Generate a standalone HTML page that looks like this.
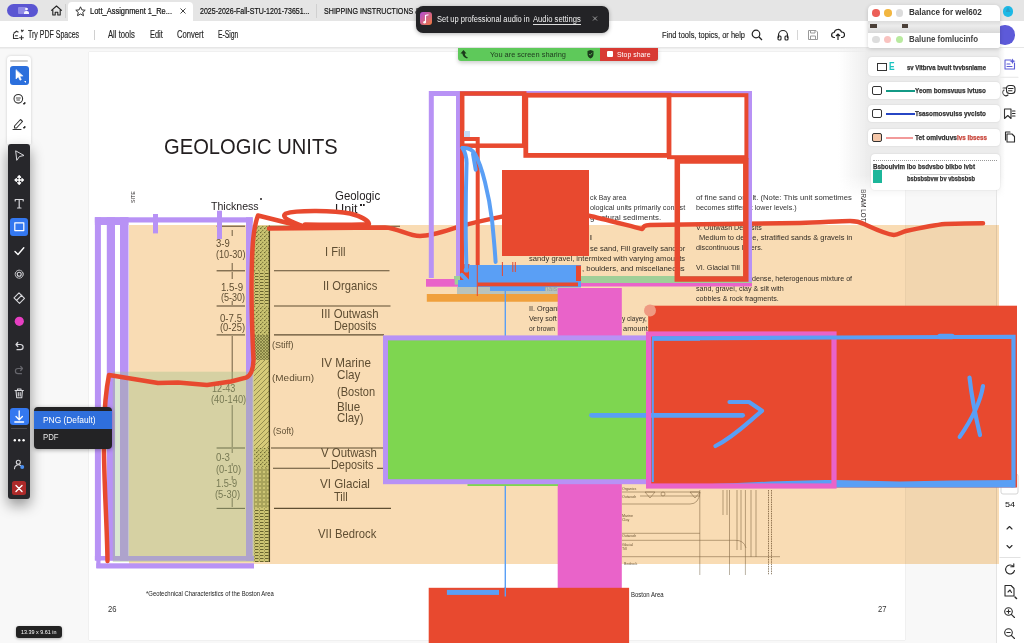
<!DOCTYPE html>
<html><head><meta charset="utf-8">
<style>
*{margin:0;padding:0;box-sizing:border-box}
html,body{width:1024px;height:643px;overflow:hidden;background:#f8f8f8;font-family:"Liberation Sans",sans-serif;position:relative}
.a{position:absolute}
.t{position:absolute;white-space:nowrap;transform-origin:0 0}
svg{position:absolute;left:0;top:0}
</style></head><body>
<div class="a" style="left:0;top:0;width:1024px;height:21px;background:#e5e5e5"></div>
<div class="a" style="left:0;top:21px;width:1024px;height:27px;background:#fff;border-bottom:1px solid #e6e6e6;box-shadow:0 1px 1px rgba(0,0,0,.04)"></div>
<div class="a" style="left:7px;top:4px;width:31px;height:13px;border-radius:7px;background:#5a55d2"></div>
<div class="a" style="left:17.5px;top:7px;width:9px;height:7px;background:#8f8ae6;border-radius:1px"></div>
<div class="a" style="left:24px;top:10.5px;width:5px;height:3.5px;background:#f4f4ff;border-radius:2px 2px 0 0"></div>
<div class="a" style="left:25.3px;top:7.8px;width:2.4px;height:2.4px;background:#f4f4ff;border-radius:50%"></div>
<svg style="left:50px;top:5px" width="13" height="11" viewBox="0 0 13 11"><path d="M1.2 5.6 L6.5 1 L11.8 5.6 M2.8 4.3 V10 H5.2 V7.2 H7.8 V10 H10.2 V4.3" fill="none" stroke="#222" stroke-width="1.1" stroke-linejoin="round"/></svg>
<div class="a" style="left:65px;top:4px;width:1px;height:14px;background:#d0d0d0"></div>
<div class="a" style="left:68px;top:2px;width:125px;height:19px;background:#fff;border-radius:4px 4px 0 0"></div>
<svg style="left:74.5px;top:6px" width="11" height="11" viewBox="0 0 11 11"><path d="M5.5 0.8 L6.9 3.9 L10.2 4.2 L7.7 6.4 L8.5 9.7 L5.5 8 L2.5 9.7 L3.3 6.4 L0.8 4.2 L4.1 3.9 Z" fill="none" stroke="#333" stroke-width="1" stroke-linejoin="round"/></svg>
<div class="t" style="left:90.0px;top:6.98px;font-size:9px;line-height:1;color:#111;font-weight:normal;transform:scaleX(0.832);-webkit-text-stroke:0.2px #111;">Lott_Assignment 1_Re...</div>
<svg style="left:180px;top:8px" width="6" height="6" viewBox="0 0 6 6"><path d="M0.5 0.5 L5.5 5.5 M5.5 0.5 L0.5 5.5" stroke="#444" stroke-width="1"/></svg>
<div class="t" style="left:199.5px;top:6.98px;font-size:9px;line-height:1;color:#111;font-weight:normal;transform:scaleX(0.782);-webkit-text-stroke:0.2px #111;">2025-2026-Fall-STU-1201-73651...</div>
<div class="a" style="left:316px;top:4px;width:1px;height:14px;background:#d0d0d0"></div>
<div class="t" style="left:324.0px;top:6.98px;font-size:9px;line-height:1;color:#111;font-weight:normal;transform:scaleX(0.790);-webkit-text-stroke:0.2px #111;">SHIPPING INSTRUCTIONS &amp;</div>
<svg style="left:12px;top:29px" width="13" height="12" viewBox="0 0 13 12"><path d="M1.5 4.5 L4.5 2.2 L6.5 3.2 M1.5 5 V9.5 H6.5 M3 6.8 H5.8 M9.5 6.5 V11 M7.2 8.8 H11.8 M9.3 0.8 L10 2.5 L11.5 1" fill="none" stroke="#333" stroke-width="1.1"/></svg>
<div class="t" style="left:28.4px;top:30.04px;font-size:10px;line-height:1;color:#222;font-weight:normal;transform:scaleX(0.700);-webkit-text-stroke:0.15px #222;">Try PDF Spaces</div>
<div class="a" style="left:94px;top:30px;width:1px;height:10px;background:#d0d0d0"></div>
<div class="t" style="left:108.4px;top:30.04px;font-size:10px;line-height:1;color:#222;font-weight:normal;transform:scaleX(0.768);-webkit-text-stroke:0.15px #222;">All tools</div>
<div class="t" style="left:149.8px;top:30.04px;font-size:10px;line-height:1;color:#222;font-weight:normal;transform:scaleX(0.737);-webkit-text-stroke:0.15px #222;">Edit</div>
<div class="t" style="left:177.0px;top:30.04px;font-size:10px;line-height:1;color:#222;font-weight:normal;transform:scaleX(0.763);-webkit-text-stroke:0.15px #222;">Convert</div>
<div class="t" style="left:218.4px;top:30.04px;font-size:10px;line-height:1;color:#222;font-weight:normal;transform:scaleX(0.676);-webkit-text-stroke:0.15px #222;">E-Sign</div>
<div class="t" style="left:662.0px;top:30.46px;font-size:9.5px;line-height:1;color:#222;font-weight:normal;transform:scaleX(0.786);-webkit-text-stroke:0.15px #222;">Find tools, topics, or help</div>
<svg style="left:751px;top:29px" width="12" height="12" viewBox="0 0 12 12"><circle cx="5" cy="5" r="3.8" fill="none" stroke="#222" stroke-width="1.2"/><path d="M7.8 7.8 L11 11" stroke="#222" stroke-width="1.3"/></svg>
<svg style="left:777px;top:29px" width="12" height="12" viewBox="0 0 12 12"><path d="M1.5 9 V6 A4.5 4.5 0 0 1 10.5 6 V9" fill="none" stroke="#222" stroke-width="1.2"/><rect x="1" y="7" width="3" height="4" rx="1" fill="none" stroke="#222" stroke-width="1.1"/><rect x="8" y="7" width="3" height="4" rx="1" fill="none" stroke="#222" stroke-width="1.1"/></svg>
<div class="a" style="left:797px;top:30px;width:1px;height:10px;background:#d6d6d6"></div>
<svg style="left:807px;top:29px" width="12" height="12" viewBox="0 0 12 12"><path d="M1.5 1.5 H9 L10.5 3 V10.5 H1.5 Z M3.5 1.5 V4 H8 V1.5 M3.5 10.5 V7 H8.5 V10.5" fill="none" stroke="#999" stroke-width="1"/></svg>
<svg style="left:831px;top:28px" width="14" height="13" viewBox="0 0 14 13"><path d="M4 9.5 H3 A2.5 2.5 0 0 1 3.2 4.5 A3.8 3.8 0 0 1 10.5 4 A2.7 2.7 0 0 1 11 9.5 H10 M7 12 V6 M5 8 L7 6 L9 8" fill="none" stroke="#222" stroke-width="1.2"/></svg>
<div class="a" style="left:996px;top:48px;width:28px;height:595px;background:#fff;border-left:1px solid #e4e4e4"></div>
<svg width="1024" height="643" viewBox="0 0 1024 643"><rect x="1001" y="474" width="17" height="20" rx="2" stroke="#d5d5d5" fill="#fff"/></svg>
<div class="a" style="left:89px;top:52px;width:816px;height:588px;background:#fff;box-shadow:0 0 1px rgba(0,0,0,.2)"></div>
<div class="t" style="left:163.7px;top:136.25px;font-size:21.8px;line-height:1;color:#231f20;font-weight:normal;transform:scaleX(0.925);">GEOLOGIC UNITS</div>
<div class="t" style="left:211.0px;top:201.07px;font-size:11.5px;line-height:1;color:#231f20;font-weight:normal;transform:scaleX(0.920);">Thickness</div>
<div class="a" style="left:259.5px;top:198px;width:2px;height:2px;border-radius:50%;background:#231f20"></div>
<div class="t" style="left:334.7px;top:190.12px;font-size:12.5px;line-height:1;color:#231f20;font-weight:normal;transform:scaleX(0.914);">Geologic</div>
<div class="t" style="left:334.5px;top:203.42px;font-size:12.5px;line-height:1;color:#231f20;font-weight:normal;transform:scaleX(1.012);">Unit</div>
<div class="a" style="left:360px;top:204px;width:5px;height:2px;border-top:2px dotted #231f20"></div>
<div class="t" style="left:130.5px;top:203px;font-size:5.5px;line-height:1;color:#231f20;transform:rotate(-90deg) scaleX(0.95);transform-origin:0 0">SITE</div>
<div class="t" style="left:215.6px;top:237.51px;font-size:10.5px;line-height:1;color:#615a47;font-weight:normal;transform:scaleX(0.903);">3-9</div>
<div class="t" style="left:215.6px;top:248.61px;font-size:10.5px;line-height:1;color:#615a47;font-weight:normal;transform:scaleX(0.869);">(10-30)</div>
<div class="t" style="left:221.0px;top:282.11px;font-size:10.5px;line-height:1;color:#615a47;font-weight:normal;transform:scaleX(0.919);">1.5-9</div>
<div class="t" style="left:221.0px;top:291.61px;font-size:10.5px;line-height:1;color:#615a47;font-weight:normal;transform:scaleX(0.857);">(5-30)</div>
<div class="t" style="left:220.0px;top:313.11px;font-size:10.5px;line-height:1;color:#615a47;font-weight:normal;transform:scaleX(0.919);">0-7.5</div>
<div class="t" style="left:220.0px;top:321.61px;font-size:10.5px;line-height:1;color:#615a47;font-weight:normal;transform:scaleX(0.893);">(0-25)</div>
<div class="t" style="left:211.7px;top:382.61px;font-size:10.5px;line-height:1;color:#615a47;font-weight:normal;transform:scaleX(0.868);">12-43</div>
<div class="t" style="left:210.7px;top:394.11px;font-size:10.5px;line-height:1;color:#615a47;font-weight:normal;transform:scaleX(0.887);">(40-140)</div>
<div class="t" style="left:216.0px;top:452.11px;font-size:10.5px;line-height:1;color:#615a47;font-weight:normal;transform:scaleX(0.923);">0-3</div>
<div class="t" style="left:216.0px;top:464.11px;font-size:10.5px;line-height:1;color:#615a47;font-weight:normal;transform:scaleX(0.893);">(0-10)</div>
<div class="t" style="left:216.0px;top:478.11px;font-size:10.5px;line-height:1;color:#615a47;font-weight:normal;transform:scaleX(0.878);">1.5-9</div>
<div class="t" style="left:215.0px;top:488.61px;font-size:10.5px;line-height:1;color:#615a47;font-weight:normal;transform:scaleX(0.893);">(5-30)</div>
<div class="t" style="left:325.0px;top:245.67px;font-size:12.2px;line-height:1;color:#615a47;font-weight:normal;transform:scaleX(0.917);">I Fill</div>
<div class="t" style="left:323.0px;top:279.87px;font-size:12.2px;line-height:1;color:#615a47;font-weight:normal;transform:scaleX(0.921);">II Organics</div>
<div class="t" style="left:321.0px;top:308.27px;font-size:12.2px;line-height:1;color:#615a47;font-weight:normal;transform:scaleX(0.935);">III Outwash</div>
<div class="t" style="left:334.4px;top:320.07px;font-size:12.2px;line-height:1;color:#615a47;font-weight:normal;transform:scaleX(0.893);">Deposits</div>
<div class="t" style="left:321.0px;top:356.77px;font-size:12.2px;line-height:1;color:#615a47;font-weight:normal;transform:scaleX(0.956);">IV Marine</div>
<div class="t" style="left:336.7px;top:369.27px;font-size:12.2px;line-height:1;color:#615a47;font-weight:normal;transform:scaleX(0.955);">Clay</div>
<div class="t" style="left:336.7px;top:386.27px;font-size:12.2px;line-height:1;color:#615a47;font-weight:normal;transform:scaleX(0.906);">(Boston</div>
<div class="t" style="left:336.7px;top:400.67px;font-size:12.2px;line-height:1;color:#615a47;font-weight:normal;transform:scaleX(0.954);">Blue</div>
<div class="t" style="left:336.7px;top:412.27px;font-size:12.2px;line-height:1;color:#615a47;font-weight:normal;transform:scaleX(0.934);">Clay)</div>
<div class="t" style="left:321.0px;top:446.87px;font-size:12.2px;line-height:1;color:#615a47;font-weight:normal;transform:scaleX(0.935);">V Outwash</div>
<div class="t" style="left:330.5px;top:458.87px;font-size:12.2px;line-height:1;color:#615a47;font-weight:normal;transform:scaleX(0.893);">Deposits</div>
<div class="t" style="left:320.0px;top:477.57px;font-size:12.2px;line-height:1;color:#615a47;font-weight:normal;transform:scaleX(0.958);">VI Glacial</div>
<div class="t" style="left:333.8px;top:490.67px;font-size:12.2px;line-height:1;color:#615a47;font-weight:normal;transform:scaleX(0.905);">Till</div>
<div class="t" style="left:318.0px;top:528.27px;font-size:12.2px;line-height:1;color:#615a47;font-weight:normal;transform:scaleX(0.926);">VII Bedrock</div>
<div class="t" style="left:272.3px;top:339.96px;font-size:9.5px;line-height:1;color:#615a47;font-weight:normal;transform:scaleX(0.950);">(Stiff)</div>
<div class="t" style="left:271.9px;top:372.96px;font-size:9.5px;line-height:1;color:#615a47;font-weight:normal;transform:scaleX(1.047);">(Medium)</div>
<div class="t" style="left:273.2px;top:425.96px;font-size:9.5px;line-height:1;color:#615a47;font-weight:normal;transform:scaleX(0.900);">(Soft)</div>
<svg width="1024" height="643" viewBox="0 0 1024 643"><defs><pattern id="dots" width="4" height="4" patternUnits="userSpaceOnUse"><rect width="4" height="4" fill="#cfe3a0"/><rect x="0" y="0" width="1.3" height="1.1" fill="#6f7a45"/><rect x="2.2" y="1.8" width="1.1" height="1.3" fill="#7d8850"/><rect x="1" y="3" width="0.9" height="0.8" fill="#8a9660"/></pattern><pattern id="hl" width="5" height="3" patternUnits="userSpaceOnUse"><rect width="5" height="3" fill="#d2e5a4"/><rect y="0" width="3.5" height="1" fill="#6a7542"/><rect x="4" y="1.5" width="1" height="0.8" fill="#7a8550"/></pattern><pattern id="xh" width="3" height="3" patternUnits="userSpaceOnUse"><rect width="3" height="3" fill="#bcd094"/><path d="M0 3 L3 0 M0 0 L3 3" stroke="#6a7542" stroke-width="0.6"/></pattern><pattern id="diag" width="5" height="5" patternUnits="userSpaceOnUse"><rect width="5" height="5" fill="#dcecaa"/><path d="M0 5 L5 0 M-1 1 L1 -1 M4 6 L6 4" stroke="#768150" stroke-width="0.65"/></pattern><pattern id="circ" width="4" height="4" patternUnits="userSpaceOnUse"><rect width="4" height="4" fill="#d2e5a4"/><circle cx="2" cy="2" r="1.3" fill="none" stroke="#6f7a45" stroke-width="0.6"/></pattern></defs><rect x="253.7" y="225.6" width="15.6" height="45.400000000000006" fill="url(#dots)"/><rect x="253.7" y="271" width="15.6" height="35" fill="url(#hl)"/><rect x="253.7" y="306" width="15.6" height="29" fill="url(#dots)"/><rect x="253.7" y="335" width="15.6" height="25" fill="url(#xh)"/><rect x="253.7" y="360" width="15.6" height="88" fill="url(#diag)"/><rect x="253.7" y="448" width="15.6" height="20" fill="url(#dots)"/><rect x="253.7" y="468" width="15.6" height="40" fill="url(#circ)"/><rect x="253.7" y="508" width="15.6" height="54" fill="url(#hl)"/><path d="M269.4 225.6 V562" stroke="#4a4a28" stroke-width="1.3"/><path d="M216.6 226.2 H245" stroke="#615a47" stroke-width="1.1"/><path d="M216.6 270.8 H245" stroke="#615a47" stroke-width="1.1"/><path d="M216.6 306 H245" stroke="#615a47" stroke-width="1.1"/><path d="M216.6 334.9 H245" stroke="#615a47" stroke-width="1.1"/><path d="M216.6 448 H245" stroke="#615a47" stroke-width="1.1"/><path d="M216.6 508.4 H245" stroke="#615a47" stroke-width="1.1"/><path d="M270 226.2 H400" stroke="#615a47" stroke-width="1.1"/><path d="M274 270.8 H389.5" stroke="#615a47" stroke-width="1.1"/><path d="M274 306 H390.5" stroke="#615a47" stroke-width="1.1"/><path d="M274 334.9 H384" stroke="#615a47" stroke-width="1.1"/><path d="M271 448 H384" stroke="#615a47" stroke-width="1.1"/><path d="M273 468.3 H330" stroke="#615a47" stroke-width="1.1"/><path d="M274 508.4 H391" stroke="#615a47" stroke-width="1.1"/><path d="M377 468.3 H384" stroke="#615a47" stroke-width="1.1"/><path d="M232.2 230 V236" stroke="#615a47" stroke-width="0.9"/><path d="M232.2 263 V270" stroke="#615a47" stroke-width="0.9"/><path d="M232.2 272 V279" stroke="#615a47" stroke-width="0.9"/><path d="M232.2 301 V305" stroke="#615a47" stroke-width="0.9"/><path d="M232.2 336 V383" stroke="#615a47" stroke-width="0.9"/><path d="M232.2 405 V447" stroke="#615a47" stroke-width="0.9"/><path d="M232.2 449 V453" stroke="#615a47" stroke-width="0.9"/><path d="M232.2 463 V466" stroke="#615a47" stroke-width="0.9"/><path d="M232.2 476 V480" stroke="#615a47" stroke-width="0.9"/><path d="M232.2 498 V507" stroke="#615a47" stroke-width="0.9"/></svg>
<div class="t" style="left:589.5px;top:193.97px;font-size:7.6px;line-height:1;color:#333;font-weight:normal;transform:scaleX(0.905);">ck Bay area</div>
<div class="t" style="left:589.5px;top:204.07px;font-size:7.6px;line-height:1;color:#333;font-weight:normal;transform:scaleX(0.948);">ological units primarily consist</div>
<div class="t" style="left:589.5px;top:214.07px;font-size:7.6px;line-height:1;color:#333;font-weight:normal;transform:scaleX(1.040);">g natural sediments.</div>
<div class="t" style="left:570.0px;top:234.07px;font-size:7.6px;line-height:1;color:#333;font-weight:normal;transform:scaleX(1.371);">I. Fill</div>
<div class="t" style="left:589.5px;top:245.07px;font-size:7.6px;line-height:1;color:#333;font-weight:normal;transform:scaleX(0.990);">se sand, Fill gravelly sand or</div>
<div class="t" style="left:528.7px;top:255.37px;font-size:7.6px;line-height:1;color:#333;font-weight:normal;transform:scaleX(1.002);">sandy gravel, intermixed with varying amounts</div>
<div class="t" style="left:582.0px;top:265.37px;font-size:7.6px;line-height:1;color:#333;font-weight:normal;transform:scaleX(1.022);">, boulders, and miscellaneous</div>
<div class="t" style="left:528.7px;top:275.37px;font-size:7.6px;line-height:1;color:#333;font-weight:normal;transform:scaleX(0.982);">debris; may contain organic</div>
<div class="t" style="left:528.7px;top:285.37px;font-size:7.6px;line-height:1;color:#333;font-weight:normal;transform:scaleX(0.918);">materials</div>
<div class="t" style="left:528.7px;top:305.37px;font-size:7.6px;line-height:1;color:#333;font-weight:normal;transform:scaleX(0.960);">II. Organics</div>
<div class="t" style="left:528.7px;top:315.37px;font-size:7.6px;line-height:1;color:#333;font-weight:normal;transform:scaleX(0.940);">Very soft</div>
<div class="t" style="left:621.5px;top:315.37px;font-size:7.6px;line-height:1;color:#333;font-weight:normal;transform:scaleX(0.859);">y clayey,</div>
<div class="t" style="left:528.7px;top:325.37px;font-size:7.6px;line-height:1;color:#333;font-weight:normal;transform:scaleX(0.878);">or  brown</div>
<div class="t" style="left:623.0px;top:325.37px;font-size:7.6px;line-height:1;color:#333;font-weight:normal;transform:scaleX(0.978);">amount</div>
<div class="t" style="left:696.2px;top:194.07px;font-size:7.6px;line-height:1;color:#333;font-weight:normal;transform:scaleX(1.012);">of fine sand or silt. (Note: This unit sometimes</div>
<div class="t" style="left:696.2px;top:204.37px;font-size:7.6px;line-height:1;color:#333;font-weight:normal;transform:scaleX(0.948);">becomes stiffer at lower levels.)</div>
<div class="t" style="left:696.2px;top:224.37px;font-size:7.6px;line-height:1;color:#333;font-weight:normal;transform:scaleX(0.936);">V. Outwash Deposits</div>
<div class="t" style="left:698.5px;top:234.37px;font-size:7.6px;line-height:1;color:#333;font-weight:normal;transform:scaleX(0.987);">Medium to dense, stratified sands &amp; gravels in</div>
<div class="t" style="left:696.2px;top:244.37px;font-size:7.6px;line-height:1;color:#333;font-weight:normal;transform:scaleX(0.941);">discontinuous layers.</div>
<div class="t" style="left:696.2px;top:264.37px;font-size:7.6px;line-height:1;color:#333;font-weight:normal;transform:scaleX(0.951);">VI. Glacial Till</div>
<div class="t" style="left:751.8px;top:275.37px;font-size:7.6px;line-height:1;color:#333;font-weight:normal;transform:scaleX(0.937);">dense, heterogenous mixture of</div>
<div class="t" style="left:696.2px;top:285.37px;font-size:7.6px;line-height:1;color:#333;font-weight:normal;transform:scaleX(0.941);">sand, gravel, clay &amp; silt with</div>
<div class="t" style="left:696.2px;top:295.37px;font-size:7.6px;line-height:1;color:#333;font-weight:normal;transform:scaleX(0.942);">cobbles &amp; rock fragments.</div>
<div class="t" style="left:859.5px;top:183px;font-size:6.3px;line-height:1;color:#231f20;transform:rotate(90deg);transform-origin:0 100%">BRAM LOTT</div>
<div class="t" style="left:145.7px;top:591.24px;font-size:6.8px;line-height:1;color:#222;font-weight:normal;transform:scaleX(0.870);">*Geotechnical Characteristics of the Boston Area</div>
<div class="t" style="left:107.8px;top:604.64px;font-size:8.7px;line-height:1;color:#333;font-weight:normal;transform:scaleX(0.878);">26</div>
<div class="t" style="left:630.5px;top:591.74px;font-size:6.8px;line-height:1;color:#222;font-weight:normal;transform:scaleX(0.883);">Boston Area</div>
<div class="t" style="left:878.0px;top:604.64px;font-size:8.7px;line-height:1;color:#333;font-weight:normal;transform:scaleX(0.878);">27</div>
<svg width="1024" height="643" viewBox="0 0 1024 643"><g stroke="#8c7d66" stroke-width="0.6" fill="none"><path d="M622 504 H690 Q699 504 700 492"/><path d="M622 533.3 H700"/><path d="M622 540.3 H735 Q744 540 746 548"/><path d="M622 556.7 H780"/><path d="M622 492 H700"/><path d="M699.8 490 V575"/><path d="M729.5 490 V575"/><path d="M745.4 490 V575"/><path d="M723 490 V515 M727 490 V515"/><path d="M737 490 V550 M741 490 V550"/><path d="M751 490 V557 M756 490 V557"/><path d="M768.5 490 V575 M771.5 490 V575" stroke-width="0.9" stroke-dasharray="1.5 0.8"/><path d="M640 496 H700" /><path d="M645 492 L650 498 L655 492 Z M690 492 L695 498 L700 492 Z"/><circle cx="663" cy="494" r="2"/></g></svg>
<div class="t" style="left:622.0px;top:487.95px;font-size:3.6px;line-height:1;color:#6b5d45;font-weight:normal;transform:scaleX(1.000);">Organics</div>
<div class="t" style="left:622.0px;top:495.95px;font-size:3.6px;line-height:1;color:#6b5d45;font-weight:normal;transform:scaleX(1.000);">Outwash</div>
<div class="t" style="left:622.0px;top:514.95px;font-size:3.6px;line-height:1;color:#6b5d45;font-weight:normal;transform:scaleX(1.000);">Marine</div>
<div class="t" style="left:622.0px;top:519.45px;font-size:3.6px;line-height:1;color:#6b5d45;font-weight:normal;transform:scaleX(1.000);">Clay</div>
<div class="t" style="left:622.0px;top:534.95px;font-size:3.6px;line-height:1;color:#6b5d45;font-weight:normal;transform:scaleX(1.000);">Outwash</div>
<div class="t" style="left:622.0px;top:543.95px;font-size:3.6px;line-height:1;color:#6b5d45;font-weight:normal;transform:scaleX(1.000);">Glacial</div>
<div class="t" style="left:622.0px;top:547.95px;font-size:3.6px;line-height:1;color:#6b5d45;font-weight:normal;transform:scaleX(1.000);">Till</div>
<div class="t" style="left:624.0px;top:563.45px;font-size:3.6px;line-height:1;color:#6b5d45;font-weight:normal;transform:scaleX(1.000);">Bedrock</div>
<div class="a" style="left:128.5px;top:225px;width:870.5px;height:339px;background:#f9dcb4;mix-blend-mode:multiply"></div>
<svg width="1024" height="643" viewBox="0 0 1024 643"><g fill="#b892f5"><rect x="94.9" y="217.3" width="157.8" height="5.2"/><rect x="94.9" y="217.3" width="33.4" height="7.7"/><rect x="94.9" y="217.3" width="6" height="343.2"/><rect x="106.8" y="217.3" width="8.2" height="339"/><rect x="120" y="217.3" width="8.5" height="343.5"/><rect x="246" y="217.3" width="6.7" height="343.5"/><rect x="94.9" y="556" width="15" height="4.5"/><rect x="110" y="556" width="144" height="4.8"/><rect x="96.3" y="563.3" width="157.7" height="5.2"/><rect x="96.3" y="556" width="4.2" height="12"/><rect x="153" y="214" width="5" height="19.4"/><rect x="217" y="210.7" width="5" height="28.3"/></g><rect x="112.8" y="371.7" width="141.2" height="190.3" fill="rgba(157,192,138,0.38)"/><rect x="246" y="371.7" width="8" height="190" fill="rgba(157,192,138,0.0)"/><g fill="none" stroke="#e8492f" stroke-width="4.5" stroke-linecap="round" stroke-linejoin="round"><path d="M107.5 561 C107 520 103 470 104 430 C104.5 400 107 385 109 375 L158 383 L178 382.5 L207 385 L231 381.5 L246 377.6 Q253 375 253.5 360 C252 330 251 290 252 260 C252.5 240 254 226 258 215.5 L306 227.5"/><path d="M306 227 C290 222 280 217 286 213.5 C296 210 335 210.5 350 213.5 C360 216 368 220 369 224 C350 225 325 225 305 224.5"/><path d="M269 228.5 L385 227.5 C398 228 408 236 420 236 C432 236 445 231 460 226.4 C475 222 490 219 502 216.6"/><path d="M589 215.7 C600 218 630 226 642.3 229 C644 226 644 225.5 650 225 C700 224 760 223.5 800 223 C820 222.5 840 221 850 221 C856 221 860 222 864 224 C875 229 885 234 893.9 235 C898 235 902 232 906 231 C920 228 935 225 945 224 C960 223.5 975 223.3 983 223.3"/></g><rect x="578" y="276" width="174" height="8" fill="#9fcf98"/><rect x="454" y="276" width="5" height="9" fill="#9fcf98"/><rect x="578" y="283" width="174" height="3.5" fill="#e963c9"/><rect x="426" y="279" width="32" height="7.7" fill="#e963c9"/><rect x="457" y="287" width="124" height="7" fill="#a9bdbd" opacity="0.8"/><rect x="426.8" y="294" width="132.2" height="7.75" fill="#f0a03c"/><g fill="none" stroke="#b892f5"><path d="M431.3 278 V93.4 H749.5 V282" stroke-width="5"/><path d="M458 93 V280" stroke-width="4"/></g><g fill="none" stroke="#e8492f"><rect x="462.2" y="93.5" width="62" height="52.2" stroke-width="4.5"/><rect x="525.8" y="95.2" width="143.2" height="60.2" stroke-width="4.8"/><rect x="669" y="95.2" width="77.4" height="62" stroke-width="4"/><rect x="677.3" y="161" width="68.5" height="118" stroke-width="5.5"/><path d="M462 282.7 V139 H477.7 V266" stroke-width="4"/></g><rect x="460.5" y="264" width="9" height="19" fill="#e8492f"/><rect x="454.7" y="276" width="5.3" height="8.6" fill="#9fcf98"/><rect x="469" y="265" width="112" height="22" fill="#5a9ff5"/><rect x="458" y="280" width="123" height="7" fill="#5a9ff5"/><rect x="490" y="287" width="55" height="4" fill="#5a9ff5"/><rect x="477.7" y="282.5" width="100.3" height="3.8" fill="#e8492f"/><rect x="576" y="265.6" width="5" height="15.4" fill="#e8492f"/><path d="M477.3 265 V296 M502.4 262 V276 M512.8 262 V272 M515.3 262 V272" stroke="#e8492f" stroke-width="1"/><rect x="502" y="170" width="87" height="86" fill="#e8492f"/><rect x="464" y="131" width="6" height="6" fill="#c5dcf7"/><g fill="none" stroke="#5a9ff5" stroke-width="4" stroke-linecap="round"><path d="M462.5 148 C468 147.5 472 149 475 154 C482 166 489 195 492 220 C494 240 495 252 495.6 262"/><path d="M462.5 148 C465 152 467 156 466.5 165 C465.5 200 465.5 240 466.5 269"/><circle cx="466.3" cy="270" r="2.6" fill="#5a9ff5" stroke="none"/><path d="M473 154 L475.7 169.7"/><path d="M461.7 274.9 L467.5 281" stroke-width="4"/></g><rect x="557.7" y="288" width="64.1" height="300" fill="#e963c9"/><path d="M505.3 287 V596.6" stroke="#5a9ff5" stroke-width="1.4"/><path d="M467.5 485 H558" stroke="#7ed650" stroke-width="2"/><rect x="385.5" y="337.9" width="263" height="143.8" fill="#7ed650" stroke="#b892f5" stroke-width="5"/><rect x="648.2" y="305.7" width="368.8" height="181.8" fill="#e8492f"/><path d="M702 484.5 C740 483 780 480.5 836 480 L900 481.5 L950 480.5 L1013.5 480 V487.5 H836 C780 487 740 486 702 484.5 Z" fill="#5a9ff5"/><g fill="none" stroke="#5a9ff5" stroke-linecap="round" stroke-linejoin="round"><path d="M591.5 415.3 H742.6" stroke-width="4.8"/><path d="M729.5 402 L749 402 L762 410.8 C748 422 735 436 715.5 446" stroke-width="4.2"/><path d="M969.5 377.5 C972 400 976 418 980 435" stroke-width="4.2"/><path d="M983 386 C980 405 970 422 959.7 436.9" stroke-width="4.2"/></g><rect x="648.6" y="334" width="185.4" height="152" fill="none" stroke="#e963c9" stroke-width="5.2"/><circle cx="650" cy="310.5" r="6" fill="#ef9a82"/><g fill="none" stroke="#5a9ff5" stroke-linecap="butt" stroke-linejoin="miter"><path d="M652.8 482 V340" stroke-width="2.1"/><path d="M652 338.5 C700 338.3 760 338 836 337.5 C880 337 920 336.8 950 337 C975 337 995 336.8 1013.5 336.8 V487.5" stroke-width="4.2"/><path d="M652.5 338.5 H700" stroke-width="4.4"/><path d="M940 336.5 H952" stroke-width="5.5" stroke-linecap="round"/></g><rect x="428.7" y="587.8" width="200.4" height="56" fill="#e8492f"/><rect x="446.9" y="589.9" width="52.1" height="5" fill="#5a9ff5"/><path d="M505.3 587 V596.6" stroke="#5a9ff5" stroke-width="1.4"/></svg>
<svg width="1024" height="643" viewBox="0 0 1024 643"><g fill="none" stroke="#2b2b2b" stroke-width="1.1" stroke-linecap="round" stroke-linejoin="round"><path d="M1007 529 L1009.5 526.5 L1012 529"/><path d="M1007 545.5 L1009.5 548 L1012 545.5"/><path d="M1000 557.5 H1020" stroke="#e2e2e2"/><path d="M1013.5 566.5 A4.5 4.5 0 1 0 1014.5 570.5 M1013.8 563.8 V566.8 H1010.8"/><path d="M1005 585.5 H1011 L1014 588.5 V596 H1005 Z M1008 592 L1010 590 L1011.5 592.5"/><path d="M1015 597 L1016.5 598.5" stroke-width="1.5"/><circle cx="1008.5" cy="611.5" r="3.8"/><path d="M1011.3 614.3 L1014.5 617.5 M1006.8 611.5 H1010.2 M1008.5 609.8 V613.2"/><circle cx="1008.5" cy="632.5" r="3.8"/><path d="M1011.3 635.3 L1014.5 638.5 M1006.8 632.5 H1010.2"/><path d="M1005 60 H1011 M1005 60 V69 H1014.5 V63" stroke="#5b5bd6"/><path d="M1007 64 H1010 M1007 66.5 H1012" stroke="#5b5bd6"/><path d="M1012.5 58.5 L1013.5 60.5 L1015.5 61 L1013.5 62 L1012.5 64 L1011.5 62 L1009.5 61 L1011.5 60.5 Z" fill="#5b5bd6" stroke="none"/><path d="M1000 77.3 H1018" stroke="#e6e6e6"/><rect x="1006.5" y="85.5" width="8.5" height="8" rx="3"/><path d="M1008.5 88.5 H1013 M1008.5 90.8 H1012"/><path d="M1003 88 H1006 M1004 90 A3 3 0 0 0 1008 95"/><path d="M1004.5 109 H1011 V118.5 L1007.8 115.5 L1004.5 118.5 Z"/><path d="M1012.5 111 H1015 M1012.5 113.5 H1015 M1012.5 116 H1015"/><path d="M1007 134 H1012 L1014.5 136.5 V142 H1007 Z"/><path d="M1005.5 140 V132 H1010"/></g></svg>
<div class="t" style="left:1004.7px;top:501.30px;font-size:7.8px;line-height:1;color:#111;font-weight:normal;transform:scaleX(1.164);">54</div>
<div class="a" style="left:995.3px;top:25.3px;width:19.4px;height:19.4px;border-radius:50%;background:#5d5ad9"></div>
<div class="a" style="left:1002.6px;top:6px;width:10.5px;height:10.5px;border-radius:50%;background:#1db9e6"></div>
<div class="a" style="left:1005.5px;top:7px;width:5px;height:5px;background:#2a9fc9;clip-path:polygon(50% 0,100% 100%,0 100%)"></div>
<div class="a" style="left:838px;top:48px;width:167px;height:150px;background:linear-gradient(90deg,rgba(236,236,236,0) 0,rgba(236,236,236,.6) 20px,#ececec 30px,#ececec 160px,rgba(236,236,236,0) 167px);-webkit-mask-image:linear-gradient(180deg,#000 85%,transparent 100%)"></div>
<div class="a" style="left:868px;top:5px;width:132px;height:43px;background:#fff;border-radius:5px 5px 2px 2px;box-shadow:0 1px 4px rgba(0,0,0,.18)"></div>
<div class="a" style="left:868px;top:21px;width:132px;height:12px;background:linear-gradient(180deg,#dcdcdc,#ececec 40%,#d8d8d8)"></div>
<div class="a" style="left:870px;top:24px;width:7px;height:4px;background:#4b4038"></div>
<div class="a" style="left:902px;top:24px;width:6px;height:4px;background:#4b4038"></div>
<div class="a" style="left:872.05px;top:9.05px;width:7.5px;height:7.5px;border-radius:50%;background:#ec5f57"></div>
<div class="a" style="left:884.05px;top:9.05px;width:7.5px;height:7.5px;border-radius:50%;background:#f2b640"></div>
<div class="a" style="left:895.75px;top:9.05px;width:7.5px;height:7.5px;border-radius:50%;background:#dcdcdc"></div>
<div class="a" style="left:872.25px;top:35.55px;width:7.5px;height:7.5px;border-radius:50%;background:#dddddd"></div>
<div class="a" style="left:883.85px;top:35.55px;width:7.5px;height:7.5px;border-radius:50%;background:#f9c3c0"></div>
<div class="a" style="left:895.95px;top:35.55px;width:7.5px;height:7.5px;border-radius:50%;background:#b9ea9f"></div>
<div class="t" style="left:909.0px;top:8.25px;font-size:8.8px;line-height:1;color:#333;font-weight:bold;transform:scaleX(0.919);">Balance for wel602</div>
<div class="t" style="left:909.0px;top:35.30px;font-size:8.5px;line-height:1;color:#444;font-weight:bold;transform:scaleX(0.931);">Balune fomlucinfo</div>
<div class="a" style="left:868px;top:57px;width:132px;height:18.5px;background:#fff;border-radius:4px;box-shadow:0 0 2px rgba(0,0,0,.12)"></div>
<div class="a" style="left:877.2px;top:63px;width:9.6px;height:8px;border:1.3px solid #333"></div>
<div class="t" style="left:889.2px;top:61.47px;font-size:11.5px;line-height:1;color:#19c3c0;font-weight:bold;transform:scaleX(0.730);">E</div>
<div class="t" style="left:907.0px;top:65.00px;font-size:6.5px;line-height:1;color:#333;font-weight:bold;transform:scaleX(0.920);-webkit-text-stroke:0.25px currentColor;">sv Vitbrva bvult tvvbsnlame</div>
<div class="a" style="left:868px;top:82px;width:132px;height:17.299999999999997px;background:#fff;border-radius:4px;box-shadow:0 0 2px rgba(0,0,0,.12)"></div>
<div class="a" style="left:872.3px;top:85.7px;width:9.3px;height:9.3px;border:1.2px solid #333;border-radius:2px"></div>
<div class="a" style="left:886px;top:89.8px;width:29px;height:2px;background:#139a86"></div>
<div class="t" style="left:915.0px;top:88.24px;font-size:6.8px;line-height:1;color:#333;font-weight:bold;transform:scaleX(0.935);-webkit-text-stroke:0.25px currentColor;">Yeom bomsvuus lvtuso</div>
<div class="a" style="left:868px;top:105px;width:132px;height:17px;background:#fff;border-radius:4px;box-shadow:0 0 2px rgba(0,0,0,.12)"></div>
<div class="a" style="left:872.3px;top:108.5px;width:9.3px;height:9.3px;border:1.2px solid #333;border-radius:2px"></div>
<div class="a" style="left:886px;top:113px;width:29px;height:2px;background:#2746c4"></div>
<div class="t" style="left:915.0px;top:111.24px;font-size:6.8px;line-height:1;color:#333;font-weight:bold;transform:scaleX(0.936);-webkit-text-stroke:0.25px currentColor;">Tsasomosvuiss yvclsto</div>
<div class="a" style="left:868px;top:129px;width:132px;height:17px;background:#fff;border-radius:4px;box-shadow:0 0 2px rgba(0,0,0,.12)"></div>
<div class="a" style="left:872.3px;top:132.5px;width:9.3px;height:9.3px;border:1.2px solid #333;border-radius:2px;background:#f4c6a8"></div>
<div class="a" style="left:886px;top:136.5px;width:27px;height:2px;background:#f29a9a"></div>
<div class="t" style="left:915.0px;top:135.24px;font-size:6.8px;line-height:1;color:#333;font-weight:bold;transform:scaleX(0.969);-webkit-text-stroke:0.25px currentColor;">Tet omlvduvs</div>
<div class="t" style="left:957.0px;top:135.24px;font-size:6.8px;line-height:1;color:#c8453a;font-weight:bold;transform:scaleX(0.923);-webkit-text-stroke:0.25px currentColor;">lvs lbsess</div>
<div class="a" style="left:870.6px;top:154px;width:129.39999999999998px;height:36px;background:#fff;border-radius:4px;box-shadow:0 0 2px rgba(0,0,0,.12)"></div>
<div class="a" style="left:873px;top:159.5px;width:124px;height:1px;border-top:1px dotted #999"></div>
<div class="t" style="left:873.0px;top:162.57px;font-size:7px;line-height:1;color:#333;font-weight:bold;transform:scaleX(0.895);-webkit-text-stroke:0.25px currentColor;">Bsboulvim lbo bsdvsbo bikbo lvbt</div>
<div class="a" style="left:910px;top:173.5px;width:60px;height:1px;background:#ccc"></div>
<div class="a" style="left:873px;top:169.5px;width:8.5px;height:13px;background:#1cb69a"></div>
<div class="t" style="left:907.0px;top:176.24px;font-size:6.8px;line-height:1;color:#333;font-weight:bold;transform:scaleX(0.845);-webkit-text-stroke:0.25px currentColor;">bsbsbsbvw bv vbsbsbsb</div>
<div class="a" style="left:7px;top:56px;width:24px;height:88px;background:#fff;border-radius:4px 4px 0 0;box-shadow:0 0 3px rgba(0,0,0,.18)"></div>
<div class="a" style="left:7.8px;top:143.7px;width:22.4px;height:355.8px;background:#27272b;border-radius:3px;box-shadow:0 6px 14px rgba(0,0,0,.42)"></div>
<div class="a" style="left:10px;top:59.5px;width:18px;height:2px;background:#c9c9c9;border-radius:1px"></div>
<div class="a" style="left:10px;top:65.5px;width:18.6px;height:19.3px;background:#2b6fdc;border-radius:3px"></div>
<div class="a" style="left:10.3px;top:217.8px;width:17.7px;height:18px;background:#3478f0;border-radius:3px"></div>
<div class="a" style="left:9.8px;top:407.9px;width:18.8px;height:17.3px;background:#3478f0;border-radius:3px"></div>
<div class="a" style="left:11.8px;top:481.3px;width:14.2px;height:14px;background:#ad2a2a;border-radius:2.5px"></div>
<div class="a" style="left:11px;top:428.3px;width:16px;height:1px;background:#4a4a50"></div>
<svg width="1024" height="643" viewBox="0 0 1024 643"><g fill="none" stroke-linecap="round" stroke-linejoin="round"><path d="M16 70 L16 79 L18.3 76.8 L20 80.3 L21.3 79.6 L19.7 76.2 L22.7 76 Z" fill="#fff" stroke="#fff" stroke-width="0.6"/><path d="M24 81 L26 81 L26 83 Z" fill="#fff"/><circle cx="18.3" cy="98.8" r="4.3" stroke="#333" stroke-width="1.1"/><path d="M16.3 98 H20.3 M16.8 100 H19.5" stroke="#333" stroke-width="0.9"/><path d="M23.5 104 L25 104 L25 102.5 Z" fill="#222" stroke="#222" stroke-width="0.8"/><path d="M14.5 126 L20.5 119.5 L22.5 121.5 L16.5 128 H14.5 Z" stroke="#333" stroke-width="1.1"/><path d="M13 129.5 H21" stroke="#333" stroke-width="1"/><path d="M23.5 128 L25 128 L25 126.5 Z" fill="#222" stroke="#222" stroke-width="0.8"/><path d="M16 151 L24 155.5 L19.5 156.5 L17 160 Z" stroke="#d8d8dc" stroke-width="1"/><path d="M19.2 175.8 V184.2 M15 180 H23.4 M17.8 177.2 L19.2 175.8 L20.6 177.2 M17.8 182.8 L19.2 184.2 L20.6 182.8 M16.4 178.6 L15 180 L16.4 181.4 M22 178.6 L23.4 180 L22 181.4" stroke="#fff" stroke-width="1.3"/><path d="M15.2 199.5 H23.2 M15.2 199.5 V201 M23.2 199.5 V201 M19.2 199.5 V208 M17.5 208 H21" stroke="#d8d8dc" stroke-width="1.2"/><rect x="14.8" y="222.8" width="9" height="7.8" stroke="#fff" stroke-width="1.2"/><path d="M15 251.5 L18 254.5 L23.8 247.8" stroke="#fff" stroke-width="1.4"/><circle cx="19.2" cy="274.2" r="2" stroke="#d8d8dc" stroke-width="1.1"/><circle cx="19.2" cy="274.2" r="4" stroke="#d8d8dc" stroke-width="1" stroke-dasharray="1.5 1"/><path d="M19 292.8 L24.5 298.3 L19.5 303.3 L14 297.8 Z M16.5 300.5 L21.8 295.2" stroke="#d8d8dc" stroke-width="1.1"/><circle cx="19.3" cy="321.3" r="4.6" fill="#e63fc2"/><path d="M16 344.5 H20.5 A2.6 2.6 0 0 1 20.5 349.7 H17 M17.8 342.5 L16 344.5 L17.8 346.5" stroke="#d8d8dc" stroke-width="1.2"/><path d="M22.5 368.5 H18 A2.6 2.6 0 0 0 18 373.7 H21.5 M20.7 366.5 L22.5 368.5 L20.7 370.5" stroke="#66666c" stroke-width="1.2"/><path d="M15 390.5 H23.4 M17.5 390.5 V389 H21 V390.5 M16 390.5 L16.7 397.8 H21.8 L22.4 390.5 M18.3 392.5 V396 M20.2 392.5 V396" stroke="#d8d8dc" stroke-width="1.1"/><path d="M19.2 411 V419.5 M16 416.5 L19.2 419.7 L22.4 416.5 M14.8 422 H23.6" stroke="#fff" stroke-width="1.3"/><circle cx="14.8" cy="440.2" r="1.2" fill="#fff"/><circle cx="19.2" cy="440.2" r="1.2" fill="#fff"/><circle cx="23.6" cy="440.2" r="1.2" fill="#fff"/><circle cx="18.3" cy="462.3" r="2" stroke="#d8d8dc" stroke-width="1.1"/><path d="M14.5 468.7 A3.8 3.8 0 0 1 20.5 465.5" stroke="#d8d8dc" stroke-width="1.1"/><circle cx="22.2" cy="467" r="2" fill="#4a8ff0"/><path d="M16 485.5 L22 491.5 M22 485.5 L16 491.5" stroke="#fff" stroke-width="1.4"/></g></svg>
<div class="a" style="left:33.6px;top:407.3px;width:78.3px;height:42px;background:#232325;border-radius:4px;box-shadow:0 1px 4px rgba(0,0,0,.35)"></div>
<div class="a" style="left:33.6px;top:411.2px;width:78.3px;height:17.6px;background:#2f6fdc"></div>
<div class="t" style="left:42.6px;top:415.74px;font-size:8.7px;line-height:1;color:#fff;font-weight:normal;transform:scaleX(0.965);">PNG (Default)</div>
<div class="t" style="left:42.6px;top:432.64px;font-size:8.7px;line-height:1;color:#e8e8e8;font-weight:normal;transform:scaleX(0.897);">PDF</div>
<div class="a" style="left:15.5px;top:625.5px;width:46px;height:12px;background:#232323;border-radius:3px;box-shadow:0 1px 3px rgba(0,0,0,.3)"></div>
<div class="t" style="left:21.0px;top:628.92px;font-size:6px;line-height:1;color:#fff;font-weight:normal;transform:scaleX(0.902);">13.39 x 9.61 in</div>
<div class="a" style="left:415.6px;top:5.6px;width:193px;height:27.4px;background:#232326;border-radius:7px;box-shadow:0 1px 4px rgba(0,0,0,.3)"></div>
<div class="a" style="left:420px;top:12px;width:12px;height:13px;border-radius:3px;background:linear-gradient(135deg,#b24cd8,#f07a3a)"></div>
<svg width="1024" height="643" viewBox="0 0 1024 643"><path d="M425.5 22.5 V15.5 L428.5 14.8" stroke="#fff" stroke-width="1.1" fill="none"/><circle cx="424.6" cy="22.3" r="1.3" fill="#fff"/><path d="M593 16.5 L597 20.5 M597 16.5 L593 20.5" stroke="#aaa" stroke-width="0.9"/></svg>
<div class="t" style="left:436.8px;top:15.47px;font-size:8.3px;line-height:1;color:#f2f2f2;font-weight:normal;transform:scaleX(0.905);">Set up professional audio in</div>
<div class="t" style="left:533.0px;top:15.47px;font-size:8.3px;line-height:1;color:#f2f2f2;font-weight:normal;transform:scaleX(0.917);">Audio settings</div>
<div class="a" style="left:533px;top:24px;width:48px;height:0.8px;background:#ddd"></div>
<div class="a" style="left:457.5px;top:47.7px;width:200px;height:13.3px;background:#5ec95a;border-radius:0 0 3px 3px;box-shadow:0 2px 4px rgba(0,0,0,.2)"></div>
<div class="a" style="left:600px;top:47.7px;width:57.5px;height:13.3px;background:#d83a33;border-radius:0 0 3px 0"></div>
<div class="t" style="left:490.0px;top:50.73px;font-size:8px;line-height:1;color:#1f3a1f;font-weight:normal;transform:scaleX(0.927);">You are screen sharing</div>
<div class="a" style="left:607px;top:51px;width:5.5px;height:5.5px;background:#fff;border-radius:1px"></div>
<div class="t" style="left:616.5px;top:51.03px;font-size:8px;line-height:1;color:#fff;font-weight:normal;transform:scaleX(0.866);">Stop share</div>
<svg width="1024" height="643" viewBox="0 0 1024 643"><path d="M460.5 53.5 L463.5 50 L466.5 53.5 H464.8 Q465 56.5 468 57.5 L467 58.5 Q463 57.5 462.3 53.5 Z" fill="#1b3a1b"/><path d="M587.5 51 L590.5 50 L593.5 51 V54 Q593.5 57 590.5 58.5 Q587.5 57 587.5 54 Z" fill="#1b3a1b"/><path d="M589 54 L590.2 55.2 L592.2 52.8" stroke="#5ec95a" stroke-width="0.8" fill="none"/></svg>
</body></html>
